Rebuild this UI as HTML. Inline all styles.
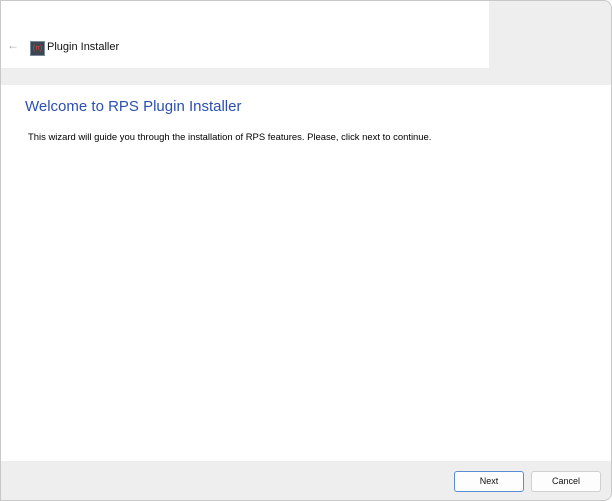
<!DOCTYPE html>
<html><head><style>
html,body{margin:0;padding:0;width:612px;height:500px;overflow:hidden;background:#fff;font-family:"Liberation Sans",sans-serif;}
.win{position:absolute;left:0;top:0;width:610px;height:499px;background:#eeeeee;border:1px solid #c8c8c8;border-radius:0 8px 8px 0;overflow:hidden;}
.top{position:absolute;left:0;top:0;width:488px;height:67px;background:#fff;}
.content{position:absolute;left:0;top:84px;width:610px;height:376px;background:#fff;}
.arrow{position:absolute;left:6px;top:37px;color:#aaa;font-size:12px;}
.icon{position:absolute;left:29px;top:40px;width:13px;height:13px;background:#3a4652;border:1px solid #7a8a9a;color:#e0403a;font-size:7px;line-height:13px;text-align:center;}
.title{position:absolute;left:46px;top:40px;font-size:11px;color:#111;}
h1{position:absolute;left:24px;top:97px;margin:0;font-weight:normal;font-size:15px;color:#2b4fb0;}
p{position:absolute;left:27px;top:131px;margin:0;font-size:9.45px;color:#000;}
.btn{position:absolute;top:470px;width:68px;height:19px;background:#fdfdfd;border:1px solid #d0d0d0;border-radius:3px;font-size:9px;text-align:center;line-height:19px;color:#111;}
</style></head><body>
<div class="win">
<div class="top"></div>
<div class="arrow">←</div>
<div class="icon">(π)</div>
<div class="title">Plugin Installer</div>
<div class="content"></div>
<h1>Welcome to RPS Plugin Installer</h1>
<p>This wizard will guide you through the installation of RPS features. Please, click next to continue.</p>
<div class="btn" style="left:453px;border-color:#5a8ed0;">Next</div>
<div class="btn" style="left:530px;">Cancel</div>
</div>
</body></html>
